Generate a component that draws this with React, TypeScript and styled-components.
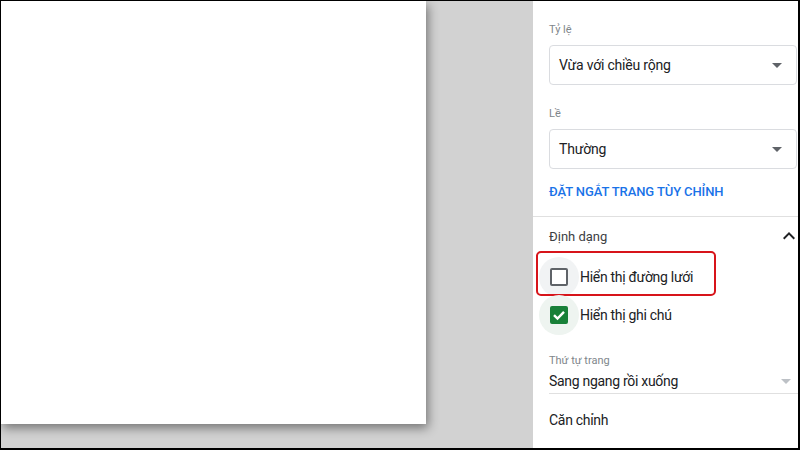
import styled, { createGlobalStyle } from "styled-components";

const GlobalStyle = createGlobalStyle`
    html, body {
        margin: 0;
        padding: 0;
        background: #ffffff;
        font-family: Roboto, "Noto Sans", "Liberation Sans", sans-serif;
    }
`;

interface ISelectProps {
    label: string;
    value: string;
}

interface ICheckRowProps {
    text: string;
    checked: boolean;
    highlighted?: boolean;
}

function DropArrow(props: { color: string }) {
    return (
        <svg width="10" height="5" viewBox="0 0 10 5">
            <path d="M0 0 L10 0 L5 5 Z" fill={props.color} />
        </svg>
    );
}

function OutlinedSelect(props: ISelectProps) {
    const { label, value } = props;
    return (
        <>
            <FieldLabel>{label}</FieldLabel>
            <SelectBox>
                <span>{value}</span>
                <DropArrow color="#5f6368" />
            </SelectBox>
        </>
    );
}

function CheckRow(props: ICheckRowProps) {
    const { text, checked, highlighted } = props;
    return (
        <Row $highlighted={!!highlighted}>
            <Ripple $checked={checked}>
                <Box $checked={checked}>
                    {checked && (
                        <svg width="14" height="14" viewBox="0 0 14 14">
                            <path d="M2 7.2 L5.5 10.6 L12 3.8" stroke="#ffffff" strokeWidth="2.4" fill="none" />
                        </svg>
                    )}
                </Box>
            </Ripple>
            <RowText>{text}</RowText>
        </Row>
    );
}

export default function App() {
    return (
        <>
            <GlobalStyle />
            <Frame>
                <Canvas>
                    <Page />
                </Canvas>
                <Panel>
                    <Section>
                        <OutlinedSelect label="Tỷ lệ" value="Vừa với chiều rộng" />
                        <Spacer />
                        <OutlinedSelect label="Lề" value="Thường" />
                        <LinkButton>ĐẶT NGẮT TRANG TÙY CHỈNH</LinkButton>
                    </Section>
                    <Section $last>
                        <SectionHeader>
                            <span>Định dạng</span>
                            <svg width="24" height="24" viewBox="0 0 24 24">
                                <path d="M7.41 15.41L12 10.83l4.59 4.58L18 14l-6-6-6 6z" fill="#202124" />
                            </svg>
                        </SectionHeader>
                        <CheckList>
                            <CheckRow text="Hiển thị đường lưới" checked={false} highlighted />
                            <CheckRow text="Hiển thị ghi chú" checked />
                        </CheckList>
                        <SmallLabel>Thứ tự trang</SmallLabel>
                        <UnderlinedSelect>
                            <span>Sang ngang rồi xuống</span>
                            <DropArrow color="#bdc1c6" />
                        </UnderlinedSelect>
                        <SubHeading>Căn chỉnh</SubHeading>
                    </Section>
                </Panel>
            </Frame>
        </>
    );
}

const Frame = styled.div`
    width: 800px;
    height: 450px;
    box-sizing: border-box;
    border-style: solid;
    border-color: #000000;
    border-width: 1px 2px 2px 1px;
    display: flex;
    overflow: hidden;
`;

const Canvas = styled.div`
    width: 532px;
    flex-shrink: 0;
    background: #d2d2d2;
    overflow: hidden;
`;

const Page = styled.div`
    width: 425px;
    height: 423px;
    background: #ffffff;
    box-shadow: 2px 4px 10px rgba(0, 0, 0, 0.45);
`;

const Panel = styled.div`
    flex: 1;
    background: #ffffff;
    overflow: hidden;
    color: #202124;
`;

const Section = styled.div<{ $last?: boolean }>`
    padding: ${(p) => (p.$last ? "9px 0 0 16px" : "21px 1px 16px 16px")};
    border-bottom: ${(p) => (p.$last ? "none" : "1px solid #e0e0e0")};
`;

const FieldLabel = styled.div`
    font-size: 11px;
    line-height: 16px;
    color: #80868b;
`;

const SelectBox = styled.div`
    margin-top: 7px;
    height: 40px;
    box-sizing: border-box;
    border: 1px solid #dadce0;
    border-radius: 4px;
    display: flex;
    align-items: center;
    justify-content: space-between;
    padding: 0 14px 0 9px;
    font-size: 14px;
    letter-spacing: -0.2px;
    color: #202124;
`;

const Spacer = styled.div`
    height: 21px;
`;

const LinkButton = styled.div`
    margin-top: 15px;
    font-size: 13px;
    line-height: 16px;
    font-weight: 500;
    color: #1a73e8;
    letter-spacing: -0.1px;
`;

const SectionHeader = styled.div`
    display: flex;
    align-items: center;
    justify-content: space-between;
    height: 20px;
    font-size: 13px;
    color: #3c4043;
    margin-right: -3px;
`;

const CheckList = styled.div`
    margin-top: 12px;
    display: flex;
    flex-direction: column;
`;

const Row = styled.div<{ $highlighted: boolean }>`
    position: relative;
    height: 38px;
    display: flex;
    align-items: center;

    &::after {
        content: "";
        display: ${(p) => (p.$highlighted ? "block" : "none")};
        position: absolute;
        left: -13px;
        top: -7px;
        width: 180px;
        height: 45px;
        box-sizing: border-box;
        border: 2px solid #d7141a;
        border-radius: 5px;
    }
`;

const Ripple = styled.div<{ $checked: boolean }>`
    width: 40px;
    height: 40px;
    margin-left: -10px;
    border-radius: 50%;
    background: ${(p) => (p.$checked ? "#eef4f0" : "#f1f3f4")};
    display: flex;
    align-items: center;
    justify-content: center;
    flex-shrink: 0;
`;

const Box = styled.div<{ $checked: boolean }>`
    width: 18px;
    height: 18px;
    box-sizing: border-box;
    border-radius: 2px;
    border: 2px solid ${(p) => (p.$checked ? "#188038" : "#5f6368")};
    background: ${(p) => (p.$checked ? "#188038" : "#ffffff")};
    display: flex;
    align-items: center;
    justify-content: center;
`;

const RowText = styled.span`
    margin-left: 1px;
    font-size: 14px;
    letter-spacing: -0.3px;
    color: #202124;
`;

const SmallLabel = styled.div`
    margin-top: 19px;
    font-size: 11px;
    line-height: 16px;
    color: #80868b;
`;

const UnderlinedSelect = styled.div`
    margin-top: 2px;
    height: 22px;
    border-bottom: 1px solid #e0e0e0;
    display: flex;
    align-items: flex-start;
    justify-content: space-between;
    padding-right: 7px;
    font-size: 14px;
    letter-spacing: -0.3px;
    line-height: 20px;

    svg {
        margin-top: 8px;
    }
`;

const SubHeading = styled.div`
    margin-top: 16px;
    font-size: 14px;
    letter-spacing: -0.3px;
    line-height: 20px;
    color: #202124;
`;
